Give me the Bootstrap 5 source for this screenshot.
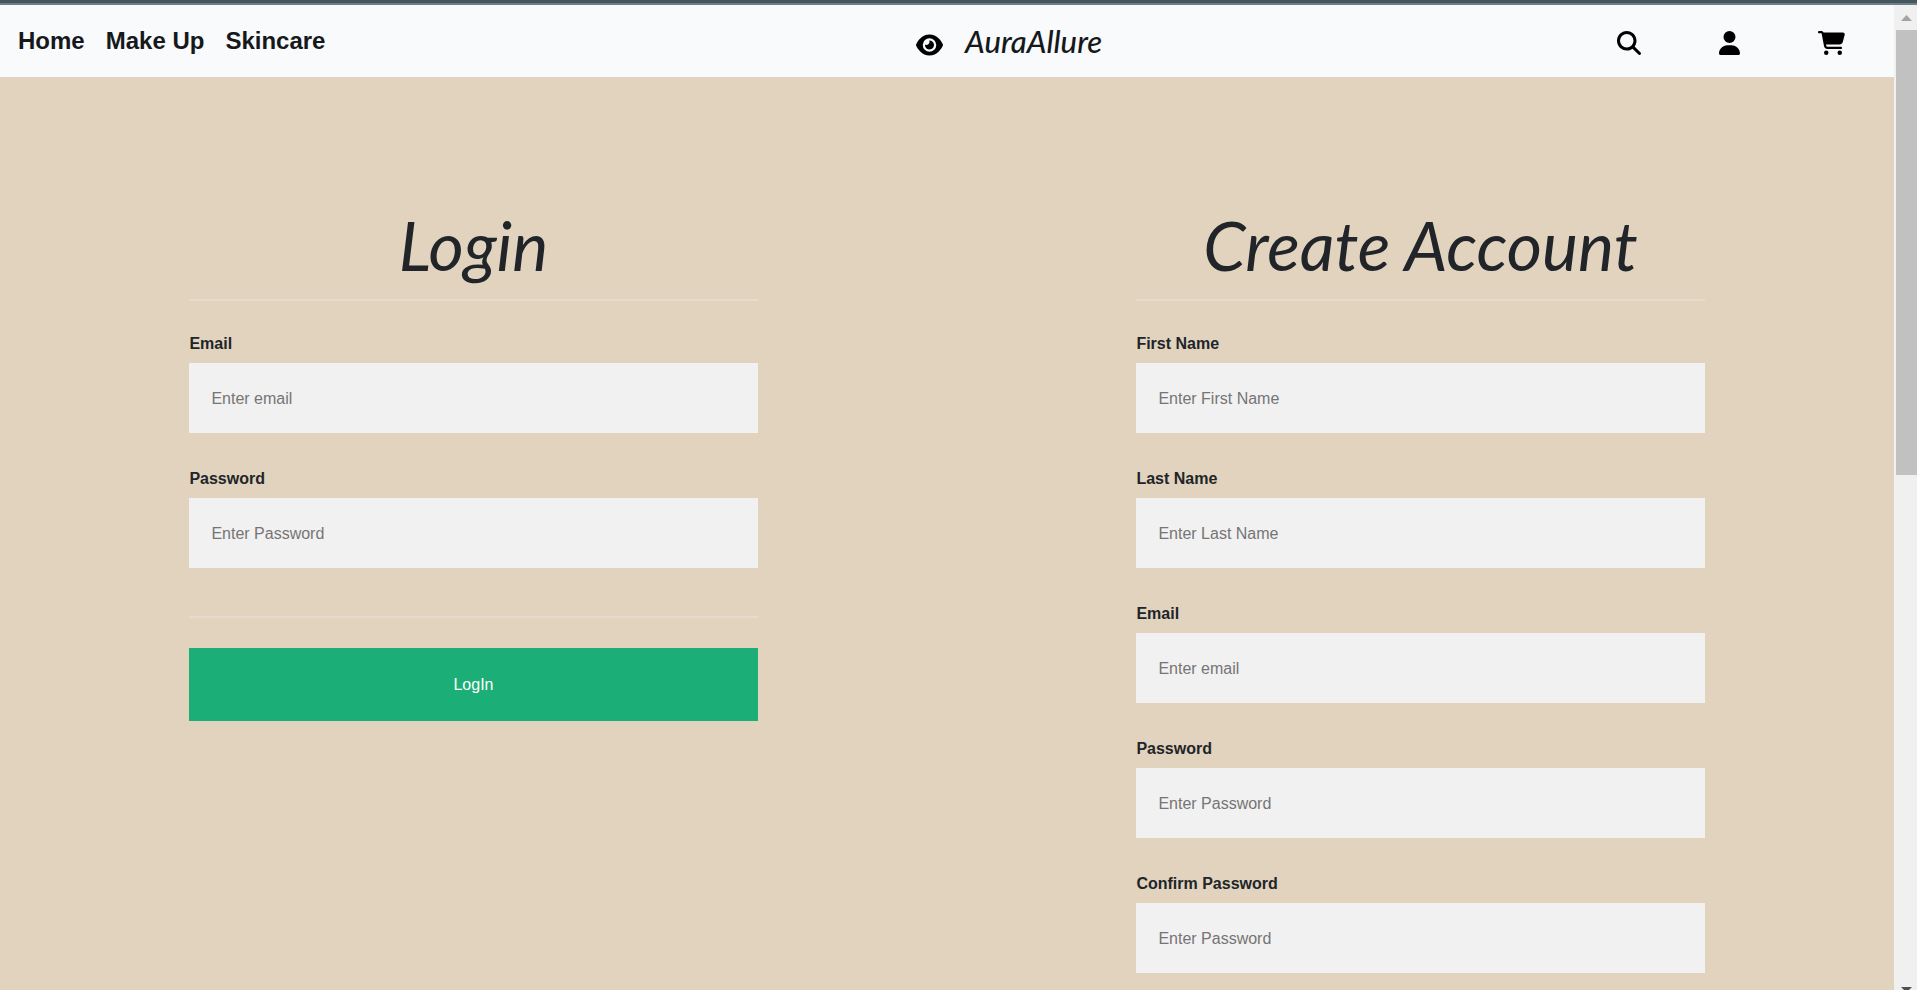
<!DOCTYPE html>
<html lang="en">
<head>
<meta charset="utf-8">
<meta name="viewport" content="width=device-width, initial-scale=1">
<title>AuraAllure</title>
<link href="https://cdn.jsdelivr.net/npm/bootstrap@5.3.0/dist/css/bootstrap.min.css" rel="stylesheet">
<style>
  body { background: #e1d3be; color: #212529; font-family: "Liberation Sans", Arial, sans-serif; font-size: 16px; }
  .top-strip { height: 5px; background: #44565e; border-bottom: 2px solid #6f8084; }
  .site-nav { background: #f8fafc; height: 72px; }
  .nav-links { flex: 0 0 48%; gap: 21px; padding-left: 18px; }
  .nav-links a { color: #16181b; font-size: 24px; font-weight: 600; text-decoration: none; }
  .brand-link { color: #16181b; gap: 22px; padding-left: 7px; text-decoration: none; }
  .script-face { font-family: Lato, sans-serif; font-style: italic; }
  .brand-name { font-size: 31px; font-weight: 500; line-height: 36px; }
  .nav-tools { gap: 78px; padding-right: 49px; padding-top: 4px; }
  .fa-glyph { height: 24px; fill: #000; display: block; }
  .brand-link .fa-glyph { margin-top: 8px; }
  .form-side { padding: 126px 10% 0; }
  .form-title { font-size: 68px; line-height: 84px; margin: 0 0 12px; font-weight: 400; text-align: center; white-space: nowrap; }
  .rule-line { border: 0; height: 2px; background: #f1f1f1; opacity: .3; margin: 0 0 31px; }
  .field { margin-bottom: 33px; }
  .field label { display: block; font-weight: 700; line-height: 24px; margin-bottom: 7px; }
  .field + .field label { padding-top: 1px; }
  .field input { display: block; width: 100%; height: 70px; padding: 2px 22px 0; border: 0; border-radius: 0; background: #f1f1f1; }
  .field input::placeholder { color: #757575; opacity: 1; }
  .rule-submit { margin: 48px 0 30px; }
  .submit-btn { height: 73px; border: 0; border-radius: 0; background: #1bae76; color: #fff; }
  .scroll-rail { flex: 0 0 23px; background: #f0f0f0; padding-left: 2px; }
  .rail-up { height: 25px; padding-top: 10px; }
  .rail-thumb { height: 45.2%; background: #c1c1c1; }
  .rail-arrow { display: block; margin: 0 auto; }
</style>
</head>
<body>
<div class="d-flex flex-column vh-100 overflow-hidden">
  <div class="top-strip flex-shrink-0"></div>
  <div class="d-flex flex-grow-1 overflow-hidden">
    <div class="flex-grow-1 overflow-hidden">
      <nav class="site-nav d-flex align-items-center">
        <ul class="nav-links d-flex list-unstyled mb-0">
          <li><a href="#">Home</a></li>
          <li><a href="#">Make Up</a></li>
          <li><a href="#">Skincare</a></li>
        </ul>
        <a class="brand-link d-flex align-items-center" href="#">
          <svg class="fa-glyph" viewBox="0 0 576 512" aria-hidden="true"><path d="M288 32c-80.8 0-145.5 36.8-192.6 80.6C48.6 156 17.3 208 2.5 243.7c-3.3 7.9-3.3 16.7 0 24.6C17.3 304 48.6 356 95.4 399.4C142.5 443.2 207.2 480 288 480s145.5-36.8 192.6-80.6c46.8-43.5 78.1-95.4 93-131.1c3.3-7.9 3.3-16.7 0-24.6c-14.9-35.7-46.2-87.7-93-131.1C433.5 68.8 368.8 32 288 32zM144 256a144 144 0 1 1 288 0 144 144 0 1 1 -288 0zm144-64c0 35.3-28.7 64-64 64c-7.1 0-13.9-1.2-20.3-3.3c-5.5-1.8-11.9 1.6-11.7 7.4c.3 6.9 1.3 13.8 3.2 20.7c13.7 51.2 66.4 81.6 117.6 67.9s81.6-66.4 67.9-117.6c-11.1-41.5-47.8-69.4-88.6-71.1c-5.8-.2-9.2 6.1-7.4 11.7c2.1 6.4 3.3 13.2 3.3 20.3z"/></svg>
          <span class="brand-name script-face">AuraAllure</span>
        </a>
        <div class="nav-tools d-flex align-items-center ms-auto">
          <a href="#" aria-label="Search"><svg class="fa-glyph" viewBox="0 0 512 512"><path d="M416 208c0 45.9-14.9 88.3-40 122.7L502.6 457.4c12.5 12.5 12.5 32.8 0 45.3s-32.8 12.5-45.3 0L330.7 376c-34.4 25.2-76.8 40-122.7 40C93.1 416 0 322.9 0 208S93.1 0 208 0S416 93.1 416 208zM208 352a144 144 0 1 0 0-288 144 144 0 1 0 0 288z"/></svg></a>
          <a href="#" aria-label="Account"><svg class="fa-glyph" viewBox="0 0 448 512"><path d="M224 256A128 128 0 1 0 224 0a128 128 0 1 0 0 256zm-45.7 48C79.8 304 0 383.8 0 482.3C0 498.7 13.3 512 29.7 512H418.3c16.4 0 29.7-13.3 29.7-29.7C448 383.8 368.2 304 269.7 304H178.3z"/></svg></a>
          <a href="#" aria-label="Cart"><svg class="fa-glyph" viewBox="0 0 576 512"><path d="M0 24C0 10.7 10.7 0 24 0H69.5c22 0 41.5 12.8 50.6 32h411c26.3 0 45.5 25 38.6 50.4l-41 152.3c-8.5 31.4-37 53.3-69.5 53.3H170.7l5.4 28.5c2.2 11.3 12.1 19.5 23.6 19.5H488c13.3 0 24 10.7 24 24s-10.7 24-24 24H199.7c-34.6 0-64.3-24.6-70.7-58.5L77.4 54.5c-.7-3.8-4-6.5-7.9-6.5H24C10.7 48 0 37.3 0 24zM128 464a48 48 0 1 1 96 0 48 48 0 1 1 -96 0zm336-48a48 48 0 1 1 0 96 48 48 0 1 1 0-96z"/></svg></a>
        </div>
      </nav>
      <main class="row g-0">
        <form class="form-side col-6">
          <h1 class="form-title script-face">Login</h1>
          <hr class="rule-line">
          <div class="field"><label for="loginEmail">Email</label><input id="loginEmail" type="text" placeholder="Enter email"></div>
          <div class="field"><label for="loginPassword">Password</label><input id="loginPassword" type="password" placeholder="Enter Password"></div>
          <hr class="rule-line rule-submit">
          <button class="submit-btn w-100" type="button">LogIn</button>
        </form>
        <form class="form-side col-6">
          <h1 class="form-title script-face">Create Account</h1>
          <hr class="rule-line">
          <div class="field"><label for="firstName">First Name</label><input id="firstName" type="text" placeholder="Enter First Name"></div>
          <div class="field"><label for="lastName">Last Name</label><input id="lastName" type="text" placeholder="Enter Last Name"></div>
          <div class="field"><label for="newEmail">Email</label><input id="newEmail" type="text" placeholder="Enter email"></div>
          <div class="field"><label for="newPassword">Password</label><input id="newPassword" type="password" placeholder="Enter Password"></div>
          <div class="field"><label for="confirmPassword">Confirm Password</label><input id="confirmPassword" type="password" placeholder="Enter Password"></div>
        </form>
      </main>
    </div>
    <div class="scroll-rail d-flex flex-column" aria-hidden="true">
      <div class="rail-up flex-shrink-0"><svg class="rail-arrow" width="11" height="6" viewBox="0 0 11 6"><path fill="#a3a3a3" d="M5.500 0 11 6H0z"/></svg></div>
      <div class="rail-thumb"></div>
      <svg class="rail-arrow mt-auto" width="11" height="3" viewBox="0 0 11 3"><path fill="#505050" d="M0 0H11L8 3H3z"/></svg>
    </div>
  </div>
</div>
<script src="https://cdn.jsdelivr.net/npm/bootstrap@5.3.0/dist/js/bootstrap.bundle.min.js"></script>
</body>
</html>
